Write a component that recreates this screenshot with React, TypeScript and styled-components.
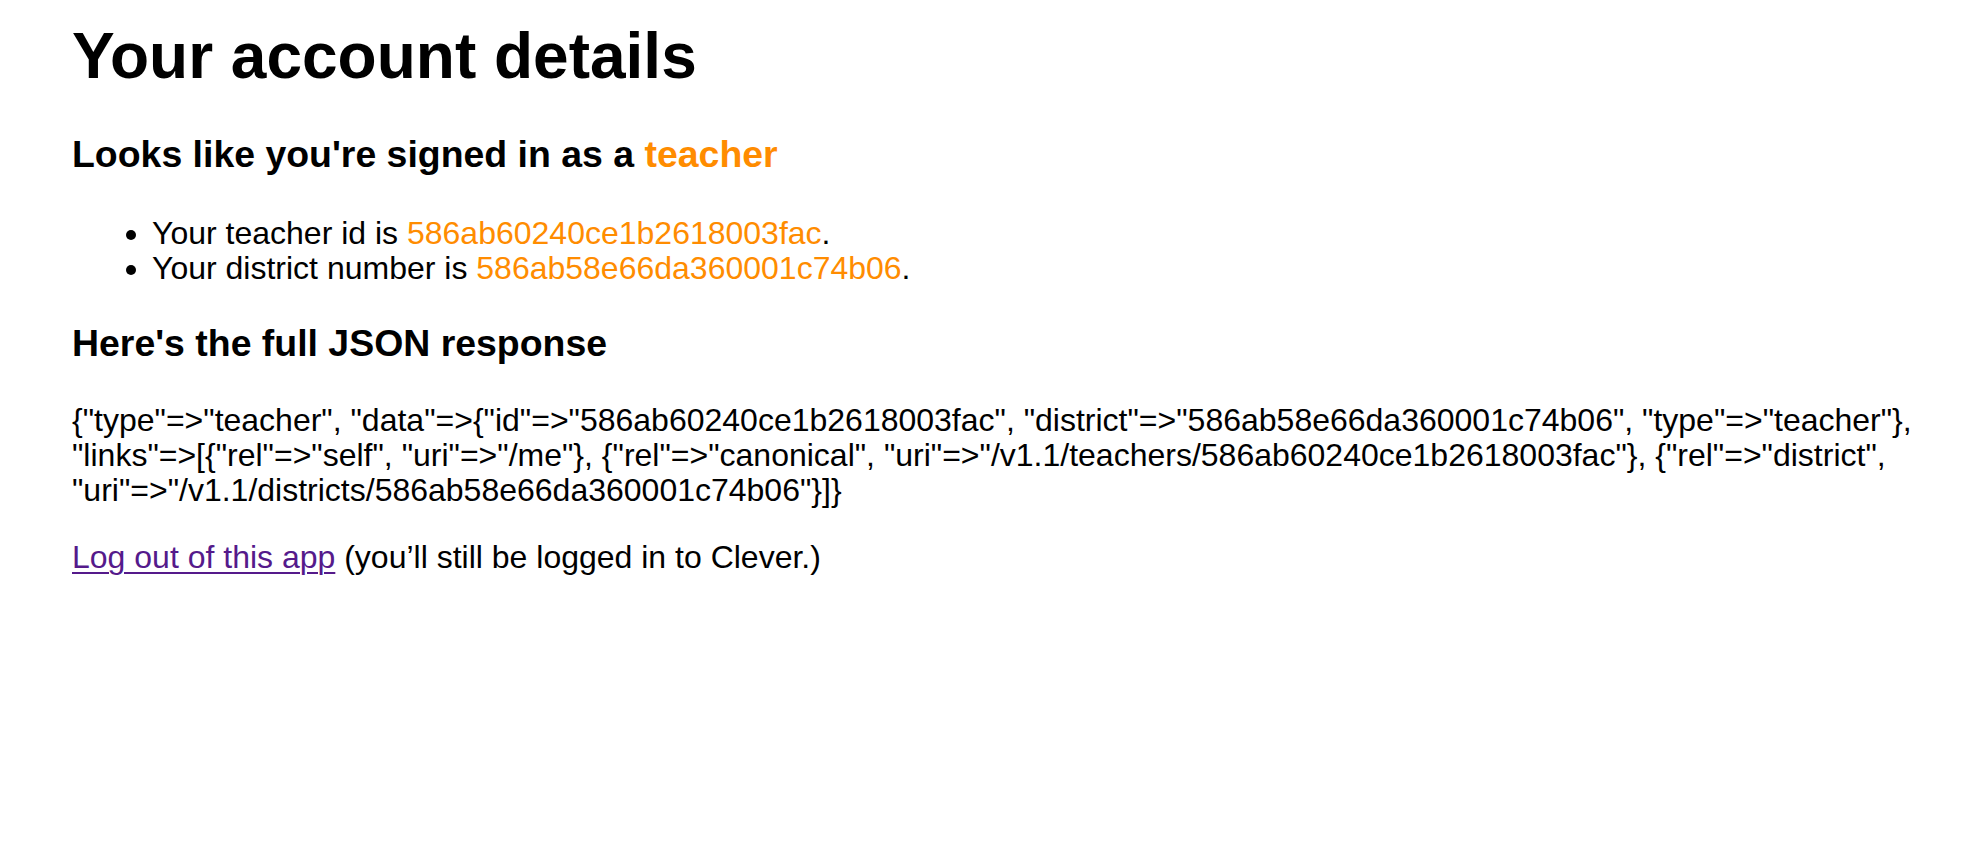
import React from "react";
import styled, { createGlobalStyle } from "styled-components";

const GlobalStyle = createGlobalStyle`
  html, body {
    margin: 0;
    padding: 0;
    background: #ffffff;
  }
  body {
    font-family: "Liberation Sans", Helvetica, Arial, sans-serif;
    color: #000000;
  }
`;

const Page = styled.main`
  display: flex;
  flex-direction: column;
  align-items: flex-start;
  padding: 19px 20px 0 72px;
  font-size: 32px;
  line-height: 35px;
`;

const Title = styled.h1`
  margin: 0;
  font-size: 64px;
  line-height: 74px;
  font-weight: 700;
`;

const Subheading = styled.h3<{ $top: number }>`
  margin: ${(p) => p.$top}px 0 0;
  font-size: 37.44px;
  line-height: 43px;
  font-weight: 700;
`;

const Highlight = styled.span`
  color: #ff8c00;
`;

const List = styled.ul<{ $top: number }>`
  margin: ${(p) => p.$top}px 0 0;
  padding-left: 80px;
  list-style: disc;
`;

const Item = styled.li`
  font-size: 32px;
  line-height: 35px;
`;

const JsonBlock = styled.p<{ $top: number }>`
  margin: ${(p) => p.$top}px 0 0;
  font-size: 32px;
  line-height: 35px;
`;

const Footer = styled.p<{ $top: number }>`
  margin: ${(p) => p.$top}px 0 0;
  font-size: 32px;
  line-height: 35px;
`;

const LogoutLink = styled.a`
  color: #551a8b;
  text-decoration: underline;
  text-decoration-thickness: 2px;
  text-underline-offset: 4px;
`;

const teacherId = "586ab60240ce1b2618003fac";
const districtId = "586ab58e66da360001c74b06";

const json = `{"type"=>"teacher", "data"=>{"id"=>"${teacherId}", "district"=>"${districtId}", "type"=>"teacher"}, "links"=>[{"rel"=>"self", "uri"=>"/me"}, {"rel"=>"canonical", "uri"=>"/v1.1/teachers/${teacherId}"}, {"rel"=>"district", "uri"=>"/v1.1/districts/${districtId}"}]}`;

export default function App() {
  return (
    <>
      <GlobalStyle />
      <Page>
        <Title>Your account details</Title>
        <Subheading $top={40}>
          Looks like you're signed in as a <Highlight>teacher</Highlight>
        </Subheading>
        <List $top={40}>
          <Item>
            Your teacher id is <Highlight>{teacherId}</Highlight>.
          </Item>
          <Item>
            Your district number is <Highlight>{districtId}</Highlight>.
          </Item>
        </List>
        <Subheading $top={36}>Here's the full JSON response</Subheading>
        <JsonBlock $top={38}>{json}</JsonBlock>
        <Footer $top={32}>
          <LogoutLink href="#">Log out of this app</LogoutLink> (you’ll still be logged in to Clever.)
        </Footer>
      </Page>
    </>
  );
}
